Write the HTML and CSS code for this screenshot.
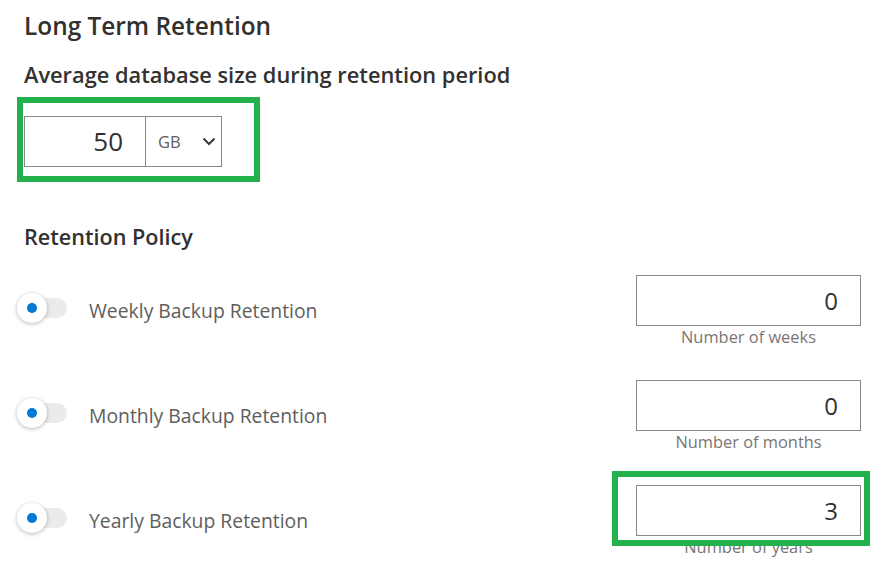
FILE: index.html
```html
<!DOCTYPE html>
<html lang="en">
<head>
<meta charset="utf-8">
<title>Long Term Retention</title>
<link rel="stylesheet" href="styles.css">
</head>
<body>
<div class="page">
  <h1 class="title">Long Term Retention</h1>
  <h2 class="subtitle">Average database size during retention period</h2>
  <div class="size-field">
    <div class="size-input">
      <div class="size-value">50</div>
      <div class="size-unit">
        <span>GB</span>
        <svg class="chevron" width="14" height="9" viewBox="0 0 14 9"><path d="M1.5 1.5 L7 7 L12.5 1.5" fill="none" stroke="#3b3a39" stroke-width="2"/></svg>
      </div>
    </div>
    <div class="annot annot-size"></div>
  </div>

  <h2 class="section">Retention Policy</h2>

  <div class="rows">
    <div class="row">
      <div class="row-left">
        <div class="toggle"><span class="track"></span><span class="thumb"><span class="dot"></span></span></div>
        <span class="label">Weekly Backup Retention</span>
      </div>
      <div class="row-right">
        <div class="num-input">0</div>
        <div class="caption">Number of weeks</div>
      </div>
    </div>
    <div class="row">
      <div class="row-left">
        <div class="toggle"><span class="track"></span><span class="thumb"><span class="dot"></span></span></div>
        <span class="label">Monthly Backup Retention</span>
      </div>
      <div class="row-right">
        <div class="num-input">0</div>
        <div class="caption">Number of months</div>
      </div>
    </div>
    <div class="row">
      <div class="row-left">
        <div class="toggle"><span class="track"></span><span class="thumb"><span class="dot"></span></span></div>
        <span class="label">Yearly Backup Retention</span>
      </div>
      <div class="row-right">
        <div class="num-wrap">
          <div class="num-input">3</div>
          <div class="annot annot-years"></div>
        </div>
        <div class="caption">Number of years</div>
      </div>
    </div>
  </div>
</div>
</body>
</html>
```

FILE: styles.css
```css
* { box-sizing: border-box; }
html, body { margin: 0; padding: 0; background: #ffffff; }
body {
  font-family: "Open Sans", "Noto Sans", "Liberation Sans", sans-serif;
  color: #323130;
  width: 886px;
  height: 571px;
  overflow: hidden;
}
.page {
  padding: 10px 0 0 24px;
}
.title {
  margin: 0;
  font-size: 24.4px;
  line-height: 32px;
  font-weight: 600;
  color: #323130;
}
.subtitle {
  margin: 18px 0 0;
  font-size: 21.8px;
  line-height: 30px;
  font-weight: 600;
  color: #323130;
}
.size-field {
  position: relative;
  width: 198px;
  margin-top: 26px;
}
.size-input {
  display: flex;
  height: 51px;
  border: 1px solid #8a8886;
  background: #fff;
}
.size-value {
  width: 121px;
  border-right: 1px solid #8a8886;
  text-align: right;
  padding-right: 22px;
  font-size: 26px;
  line-height: 49px;
  color: #323130;
}
.size-unit {
  flex: 1;
  display: flex;
  align-items: center;
  justify-content: space-between;
  padding: 0 5px 0 12px;
  font-size: 16.5px;
  color: #605e5c;
}
.chevron { display: block; }
.annot {
  position: absolute;
  border: 6px solid #22b14c;
  pointer-events: none;
}
.annot-size {
  left: -7px;
  top: -19px;
  right: -38px;
  bottom: -15px;
}
.section {
  margin: 56px 0 0;
  font-size: 21.6px;
  line-height: 28px;
  font-weight: 600;
  color: #323130;
}
.rows {
  margin-top: 24px;
  margin-left: -24px;
}
.row {
  display: grid;
  grid-template-columns: 636px 225px;
  height: 105px;
}
.row-left {
  display: flex;
  align-items: center;
  align-self: start;
  margin-top: 17px;
  height: 32px;
  padding-left: 16px;
}
.toggle {
  position: relative;
  width: 51px;
  height: 32px;
  flex: none;
}
.track {
  position: absolute;
  left: 11px;
  top: 6px;
  width: 40px;
  height: 20px;
  border-radius: 10px;
  background: #edebe9;
}
.thumb {
  position: absolute;
  left: 1px;
  top: 1px;
  width: 30px;
  height: 30px;
  border-radius: 50%;
  background: #fff;
  box-shadow: 0 1px 4px rgba(0, 0, 0, 0.28);
  display: flex;
  align-items: center;
  justify-content: center;
}
.dot {
  width: 10px;
  height: 10px;
  border-radius: 50%;
  background: #0078d4;
}
.label {
  margin-left: 22px;
  padding-top: 6px;
  font-size: 19.35px;
  line-height: 32px;
  color: #605e5c;
}
.row-right {
  display: flex;
  flex-direction: column;
}
.num-wrap { position: relative; }
.num-input {
  height: 51px;
  border: 1px solid #8a8886;
  text-align: right;
  padding-right: 22px;
  font-size: 24px;
  line-height: 49px;
  color: #323130;
  background: #fff;
}
.caption {
  margin-top: 1px;
  text-align: center;
  font-size: 16.4px;
  line-height: 20px;
  color: #7a7574;
}
.annot-years {
  left: -24px;
  top: -14px;
  right: -9px;
  bottom: -10px;
}
```
